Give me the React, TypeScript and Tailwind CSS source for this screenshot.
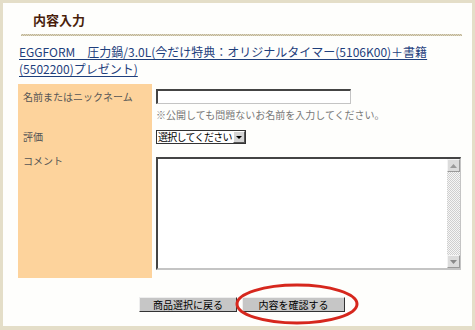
import React from 'react';

const jp = "font-['Noto_Sans_CJK_JP','Liberation_Sans',sans-serif]";

function ScrollButton({ up }: { up: boolean }) {
  return (
    <div className="h-[13px] w-[13px] bg-[#dcdcdc] border border-t-[#f4f4f4] border-l-[#f4f4f4] border-b-[#9a9a9a] border-r-[#9a9a9a] flex items-center justify-center">
      <svg width="7" height="4" viewBox="0 0 7 4">
        {up ? <path d="M0 4 L3.5 0 L7 4 Z" fill="#9a9a9a" /> : <path d="M0 0 L7 0 L3.5 4 Z" fill="#8a8a8a" />}
      </svg>
    </div>
  );
}

export default function App() {
  return (
    <div className={`w-[475px] h-[330px] bg-[#e4dec8] pt-[3px] pl-[3px] pr-[3px] pb-[4px] ${jp}`}>
      <div className="relative h-full bg-[#fefefc] flex flex-col">
        {/* Header */}
        <div className="pl-[30px] pt-[9px] h-[31px] text-[13px] leading-[16px] font-bold text-[#4a1e0c]">内容入力</div>
        <div className="ml-[18px] mr-[10px] h-[2px] bg-[repeating-conic-gradient(#bfb596_0_25%,#ddd6c0_0_50%)] bg-[length:2px_2px]" />

        {/* Product link */}
        <div className="pl-[16px] pt-[7px] text-[12px] leading-[17px] text-[#1e3f7c]">
          <a href="#" className="underline underline-offset-[2px] whitespace-nowrap">
            EGGFORM　圧力鍋/3.0L(今だけ特典：オリジナルタイマー(5106K00)＋書籍
          </a>
          <br />
          <a href="#" className="underline underline-offset-[2px]">(5502200)プレゼント)</a>
        </div>

        {/* Form */}
        <div className="ml-[15px] mt-[7px] grid grid-cols-[134px_305px] gap-x-[4px] text-[10px] leading-[12px]">
          <div className="bg-[#fdd39c] h-[40px] pl-[5px] pt-[7px] text-[#555]">名前またはニックネーム</div>
          <div className="pt-[5px]">
            <div className="h-[15px] w-[195px] border-t-2 border-l-2 border-t-[#444] border-l-[#444] border-b border-r border-b-[#c4c4c4] border-r-[#c4c4c4] bg-white" />
            <div className="mt-[5px] text-[#777]">※公開しても問題ないお名前を入力してください。</div>
          </div>

          <div className="bg-[#fdd39c] h-[26px] pl-[5px] pt-[7px] text-[#555]">評価</div>
          <div className="pt-[6px]">
            <div className="inline-flex h-[14px] w-[90px] border border-[#333] bg-white items-stretch">
              <div className="flex-1 pl-[1px] leading-[12px] text-[10px] tracking-[-0.7px] text-black whitespace-nowrap">選択してください</div>
              <div className="w-[12px] bg-[#d4d4d4] border border-t-white border-l-white border-b-[#555] border-r-[#555] flex items-center justify-center">
                <svg width="6" height="3" viewBox="0 0 6 3">
                  <path d="M0 0 L6 0 L3 3 Z" fill="#000" />
                </svg>
              </div>
            </div>
          </div>

          <div className="bg-[#fdd39c] h-[128px] pl-[5px] pt-[5px] text-[#555]">コメント</div>
          <div className="pt-[7px]">
            <div className="flex h-[113px] w-[305px] border-t-2 border-l-2 border-t-[#444] border-l-[#444] border-b-2 border-r border-b-[#c4c4c4] border-r-[#c4c4c4] bg-white">
              <textarea className="flex-1 resize-none outline-none bg-transparent" />
              <div className="w-[13px] flex flex-col">
                <ScrollButton up />
                <div className="flex-1 bg-[repeating-conic-gradient(#cfcfcf_0_25%,#f6f6f6_0_50%)] bg-[length:2px_2px]" />
                <ScrollButton up={false} />
              </div>
            </div>
          </div>
        </div>

        {/* Buttons */}
        <div className="relative mt-[19px] pl-[136px] flex gap-[5px] text-[10px] leading-[12px] text-black">
          <button className="h-[15px] w-[98px] bg-[#c6c6c6] border border-t-[#eee] border-l-[#eee] border-b-[#333] border-r-[#333]">商品選択に戻る</button>
          <button className="h-[15px] w-[103px] bg-[#c6c6c6] border border-t-[#eee] border-l-[#eee] border-b-[#333] border-r-[#333]">内容を確認する</button>
        </div>

        {/* Red annotation ellipse */}
        <svg className="absolute left-[231px] top-[279px] pointer-events-none" width="126" height="44" viewBox="0 0 126 44">
          <ellipse cx="63" cy="22" rx="60" ry="19" fill="none" stroke="#d6271d" strokeWidth="3" />
        </svg>
      </div>
    </div>
  );
}
